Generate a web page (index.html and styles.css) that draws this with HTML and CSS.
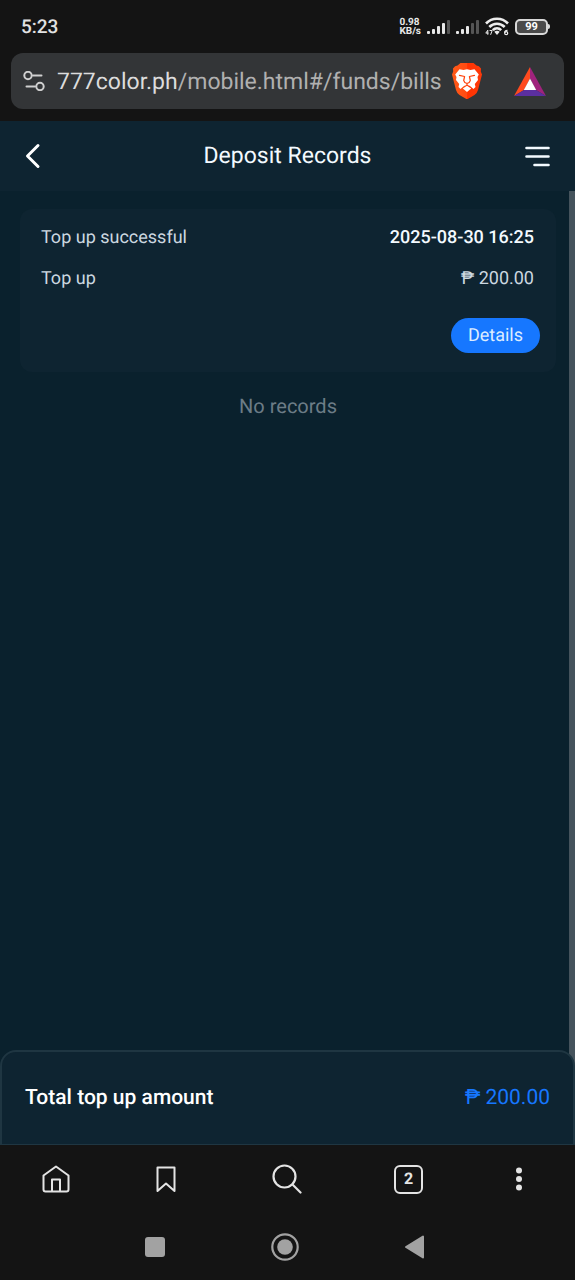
FILE: index.html
```html
<!DOCTYPE html>
<html lang="en">
<head>
<meta charset="utf-8">
<meta name="viewport" content="width=device-width, initial-scale=1">
<title>Deposit Records</title>
<link rel="stylesheet" href="styles.css">
</head>
<body>
<div class="screen">
  <div class="status-bar">
    <span class="clock">5:23</span>
    <div class="status-icons">
      <span class="net-speed"><span>0.98</span><span>KB/s</span></span>
      <svg class="signal" viewBox="0 0 23 16" width="23" height="16" aria-hidden="true">
        <g fill="#e8e8e8"><rect x="0" y="12" width="3" height="3" rx="1"/><rect x="5" y="10" width="3" height="5" rx="1"/><rect x="10" y="7" width="3" height="8" rx="1"/><rect x="15" y="4" width="3" height="11" rx="1"/></g>
        <rect x="20" y="1" width="3" height="14" rx="1" fill="#555"/>
      </svg>
      <svg class="signal" viewBox="0 0 23 16" width="23" height="16" aria-hidden="true">
        <g fill="#e8e8e8"><rect x="0" y="12" width="3" height="3" rx="1"/><rect x="5" y="10" width="3" height="5" rx="1"/><rect x="10" y="7" width="3" height="8" rx="1"/></g>
        <g fill="#555"><rect x="15" y="4" width="3" height="11" rx="1"/><rect x="20" y="1" width="3" height="14" rx="1"/></g>
      </svg>
      <svg class="wifi" viewBox="0 0 24 19" width="24" height="19" aria-hidden="true">
        <g fill="none" stroke="#ececec" stroke-width="2.600">
          <path d="M1 6.500C7 .2 17 .2 23 6.500"/><path d="M4.300 10C8.700 5.600 15.300 5.600 19.700 10"/><path d="M7.800 13.200C10.200 10.800 13.800 10.800 16.200 13.200"/>
        </g>
        <path d="M9.300 14.700Q12 12.600 14.700 14.700L12 18Z" fill="#ececec"/>
        <path d="M2.800 13.200.8 16.100H3.500M2.800 13.200V17.800M4.600 13.500H7.200L5.600 17.800" fill="none" stroke="#ececec"/>
        <path d="M22.500 13.400Q19.700 13.200 19.700 16" fill="none" stroke="#ececec" stroke-width="1.400"/>
        <circle cx="21.200" cy="16.200" r="1.500" fill="none" stroke="#ececec" stroke-width="1.300"/>
      </svg>
      <span class="battery"><span class="battery-level">99</span></span>
    </div>
  </div>

  <div class="address-row">
    <div class="address-bar">
      <button class="icon-button" aria-label="Site settings">
        <svg viewBox="0 0 22 20" width="22" height="20" fill="none" stroke="#d0d0d0" stroke-width="2" stroke-linecap="round">
          <circle cx="5" cy="4.500" r="3.700"/><path d="M10 4.500H18.500"/><circle cx="17" cy="15.500" r="3.700"/><path d="M3.500 15.500H12"/>
        </svg>
      </button>
      <button class="address" aria-label="Edit address"><span class="domain">777color.ph</span>/mobile.html#/funds/bills</button>
      <button class="icon-button shield" aria-label="Brave Shields">
        <svg viewBox="0 0 30 36" width="30" height="36">
          <defs><linearGradient id="lion" x1="0" x2="1"><stop offset="0" stop-color="#ff5a18"/><stop offset=".5" stop-color="#ff4a12"/><stop offset=".52" stop-color="#ff3200"/><stop offset="1" stop-color="#ff3a0a"/></linearGradient></defs>
          <path fill="url(#lion)" d="M8.500 0H21.500L24.500 2.500Q27 2.500 29 5.500L28.800 8.500 30 11.500 26 27Q25.200 30 22.500 32L16.500 35.500Q15 36.500 13.500 35.500L7.500 32Q4.800 30 4 27L0 11.500 1.200 8.500 1 5.500Q3 2.500 5.500 2.500Z"/>
          <path fill="#fff" d="M7.500 6.300 11.500 7 15 6.200 18.500 7 22.500 6.300 26.800 11.500 25.500 14 26 17 22.800 21 23.500 24 21.500 26 18 23 15 21.800 12 23 8.500 26 6.500 24 7.200 21 4 17 4.500 14 3.200 11.500Z"/>
          <path fill="#fff" d="M15 22.800 19.200 25.500 15 29 10.800 25.500Z"/>
          <path fill="none" stroke="#ff430c" stroke-width="1.200" stroke-linecap="round" stroke-linejoin="round" d="M7.500 12.300 12.600 13.500 11.700 17.500 12.800 19.500 15 20.500 17.200 19.500 18.300 17.500 17.400 13.500 22.500 12.300M15 20.500V22.500"/>
        </svg>
      </button>
      <button class="icon-button" aria-label="Brave Rewards">
        <svg viewBox="0 0 32 29" width="32" height="29">
          <path fill="#ff4a1f" d="M16 0V11.500L10 23 0 29Z"/><path fill="#a0237d" d="M16 0 32 29 22 23 16 11.500Z"/><path fill="#5b2fa0" d="M0 29 10 23H22L32 29Z"/><path fill="#fff" d="M16 11.500 22.200 23H9.800Z"/>
        </svg>
      </button>
    </div>
  </div>

  <header class="page-header">
    <button class="icon-button back" aria-label="Back">
      <svg viewBox="0 0 16 26" width="16" height="26" fill="none" stroke="#fff" stroke-width="3" stroke-linecap="round" stroke-linejoin="round"><path d="M13 2.500 2.500 13 13 23.500"/></svg>
    </button>
    <h1 class="page-title">Deposit Records</h1>
    <button class="icon-button menu" aria-label="Menu">
      <svg viewBox="0 0 25 22" width="25" height="22" stroke="#f3faff" stroke-width="2.600" stroke-linecap="round"><path d="M1.500 3H23.500M1.500 11.500H23.500M9.500 20H23.500"/></svg>
    </button>
  </header>

  <main class="records">
    <div class="record-list">
      <article class="record">
        <div class="record-line"><span>Top up successful</span><time class="record-date" datetime="2025-08-30T16:25">2025-08-30 16:25</time></div>
        <div class="record-line"><span>Top up</span><span>₱ 200.00</span></div>
        <button class="details">Details</button>
      </article>
      <p class="empty">No records</p>
    </div>
    <div class="scroll-thumb"></div>
  </main>

  <section class="total">
    <span class="total-label">Total top up amount</span>
    <span class="total-amount">₱ 200.00</span>
  </section>

  <nav class="browser-nav" aria-label="Browser">
    <button class="icon-button" aria-label="Home">
      <svg viewBox="0 0 28 28" width="28" height="28" fill="none" stroke="#e4e4e4" stroke-width="2" stroke-linejoin="round"><path d="M1.500 10.500 14 1.500 26.500 10.500V24.500Q26.500 26.500 24.500 26.500H3.500Q1.500 26.500 1.500 24.500ZM10 26V14.500H18V26"/></svg>
    </button>
    <button class="icon-button" aria-label="Bookmarks">
      <svg viewBox="0 0 20 28" width="20" height="28" fill="none" stroke="#e4e4e4" stroke-width="2" stroke-linejoin="round"><path d="M1.500 2.500H18.500V26L10 18.500 1.500 26Z"/></svg>
    </button>
    <button class="icon-button" aria-label="Search">
      <svg viewBox="0 0 30 30" width="30" height="30" fill="none" stroke="#e4e4e4" stroke-width="2.200" stroke-linecap="round"><circle cx="12.500" cy="12.500" r="11"/><path d="M20.500 20.500 28.500 28.500"/></svg>
    </button>
    <button class="tabs" aria-label="2 open tabs">2</button>
    <button class="icon-button" aria-label="More">
      <svg viewBox="0 0 8 24" width="8" height="24" fill="#e4e4e4"><circle cx="4" cy="3.500" r="3"/><circle cx="4" cy="12" r="3"/><circle cx="4" cy="20.500" r="3"/></svg>
    </button>
  </nav>

  <nav class="system-nav" aria-label="System">
    <button class="icon-button" aria-label="Recent apps">
      <svg viewBox="0 0 28 28" width="28" height="28"><rect x="4" y="4" width="20" height="20" rx="3" fill="#a2a2a2"/></svg>
    </button>
    <button class="icon-button" aria-label="Home screen">
      <svg viewBox="0 0 28 28" width="28" height="28"><circle cx="14" cy="14" r="12.700" fill="none" stroke="#a2a2a2" stroke-width="2.200"/><circle cx="14" cy="14" r="7.800" fill="#a2a2a2"/></svg>
    </button>
    <button class="icon-button" aria-label="System back">
      <svg viewBox="0 0 28 28" width="28" height="28"><path d="M22 3.500V24.500L5 14Z" fill="#a2a2a2" stroke="#a2a2a2" stroke-width="2" stroke-linejoin="round"/></svg>
    </button>
  </nav>
</div>
</body>
</html>
```
FILE: styles.css
```css
* { box-sizing: border-box; }

body {
  margin: 0;
  background: #141414;
  color: #fff;
  font-family: Roboto, "Noto Sans", sans-serif;
  text-rendering: geometricPrecision;
}

button {
  margin: 0;
  padding: 0;
  border: 0;
  background: none;
  color: inherit;
  font: inherit;
  text-rendering: inherit;
  cursor: pointer;
}

svg { display: block; }

.screen {
  display: flex;
  flex-direction: column;
  min-height: 100vh;
}

.icon-button {
  display: flex;
  align-items: center;
  justify-content: center;
  flex: none;
}

.status-bar {
  display: flex;
  align-items: center;
  justify-content: space-between;
  height: 53px;
  padding: 0 25px 0 21px;
}

.clock {
  color: #e2e2e2;
  font-size: 19px;
  font-weight: 500;
}

.status-icons {
  display: flex;
  align-items: center;
  gap: 6px;
}

.net-speed {
  display: flex;
  flex-direction: column;
  color: #e8e8e8;
  font-size: 10px;
  font-weight: 700;
  line-height: 9px;
}

.battery {
  display: flex;
  align-items: center;
}

.battery::after {
  content: "";
  width: 2px;
  height: 5px;
  border-radius: 0 2px 2px 0;
  background: #d8d8d8;
}

.battery-level {
  width: 33px;
  height: 16px;
  border: 2px solid #d8d8d8;
  border-radius: 5px;
  background: #4a4a4a;
  font-size: 11px;
  font-weight: 700;
  line-height: 12px;
  text-align: center;
}

.address-row { padding: 0 11px 12px; }

.address-bar {
  display: flex;
  align-items: center;
  height: 56px;
  padding: 0 18px 0 12px;
  border-radius: 12px;
  background: #333537;
}

.address {
  flex: 1;
  min-width: 0;
  overflow: hidden;
  padding: 2px 0 0 12px;
  color: #b0b0b0;
  font-size: 23px;
  line-height: 32px;
  text-align: left;
  white-space: nowrap;
}

.domain { color: #dcdcdc; }

.shield { margin-right: 32px; }

.page-header {
  display: grid;
  grid-template-columns: 1fr auto 1fr;
  align-items: center;
  height: 70px;
  padding: 0 25px;
  background: #0e2431;
}

.back { justify-self: start; }

.menu { justify-self: end; }

.page-title {
  margin: 0;
  color: #f3faff;
  font-size: 23px;
  font-weight: 400;
  line-height: 32px;
}

.records {
  display: flex;
  flex: 1;
  background: #0a212d;
}

.record-list {
  flex: 1;
  padding: 18px 13px 32px 20px;
}

.scroll-thumb {
  width: 6px;
  background: #45535c;
}

.record {
  display: flex;
  flex-direction: column;
  gap: 17px;
  padding: 17px 22px 19px 21px;
  border-radius: 12px;
  background: #0e2431;
  color: #ccd8e0;
  font-size: 18px;
  line-height: 24px;
}

.record-line {
  display: flex;
  justify-content: space-between;
}

.record-date {
  color: #f3faff;
  font-weight: 500;
}

.details {
  align-self: flex-end;
  height: 35px;
  margin: 10px -6px 0 0;
  padding: 0 17px;
  border-radius: 18px;
  background: #1677ff;
  color: #dcecff;
}

.empty {
  margin: 20px 0 0;
  color: #6c7c86;
  font-size: 20px;
  line-height: 28px;
  text-align: center;
}

.total {
  display: flex;
  align-items: center;
  justify-content: space-between;
  height: 95px;
  margin-top: -16px;
  padding: 0 23px;
  border: 2px solid #1f3642;
  border-bottom-width: 1px;
  border-radius: 16px 16px 0 0;
  background: #0e2431;
  font-size: 21px;
  line-height: 28px;
}

.total-label { font-weight: 500; }

.total-amount { color: #1677ff; }

.browser-nav {
  display: grid;
  grid-template-columns: 112fr 108fr 134fr 108fr 112fr;
  align-items: center;
  justify-items: center;
  height: 68px;
}

.tabs {
  width: 29px;
  height: 29px;
  border: 2px solid #e4e4e4;
  border-radius: 6px;
  color: #e4e4e4;
  font-size: 16px;
  font-weight: 700;
  line-height: 24px;
}

.system-nav {
  display: flex;
  align-items: center;
  justify-content: space-between;
  height: 67px;
  padding: 0 146px 0 141px;
}
```
